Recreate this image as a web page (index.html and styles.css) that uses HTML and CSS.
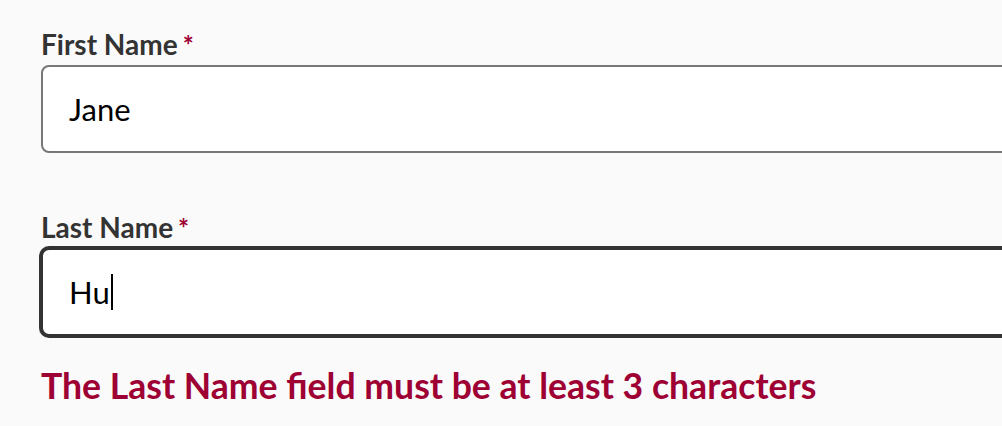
FILE: index.html
```html
<!DOCTYPE html>
<html lang="en">
<head>
<meta charset="utf-8">
<title>Name form</title>
<link rel="stylesheet" href="styles.css">
</head>
<body>
<form class="form">
  <div class="field">
    <label class="label">First Name<span class="req">*</span></label>
    <div class="input">Jane</div>
  </div>
  <div class="field">
    <label class="label">Last Name<span class="req">*</span></label>
    <div class="input input--focus">Hu<span class="caret"></span></div>
    <p class="error">The Last Name field must be at least 3 characters</p>
  </div>
</form>
</body>
</html>
```
FILE: styles.css
```css
html, body {
  margin: 0;
  padding: 0;
  background: #fafafa;
  overflow: hidden;
  height: 100%;
}
body {
  font-family: Lato, "Open Sans", sans-serif;
}
.form {
  display: flex;
  flex-direction: column;
  gap: 59px;
  padding: 29px 0 0 41px;
  width: 1100px;
}
.field {
  display: flex;
  flex-direction: column;
}
.label {
  font-weight: 700;
  font-size: 28px;
  line-height: 30px;
  color: #333333;
  margin-bottom: 5px;
}
.req {
  color: #9e0034;
  margin-left: 5px;
  font-size: 26px;
}
.input {
  box-sizing: border-box;
  height: 88px;
  border: 2px solid #777777;
  border-radius: 8px;
  background: #ffffff;
  display: flex;
  align-items: center;
  padding-left: 26px;
  font-size: 31px;
  color: #000000;
}
.input--focus {
  border-color: #333333;
  box-shadow: 0 0 0 2px #333333;
}
.caret {
  display: inline-block;
  width: 2px;
  height: 36px;
  background: #000;
  margin-left: 1px;
}
.error {
  margin: 30px 0 0;
  font-weight: 700;
  font-size: 35.6px;
  line-height: 40px;
  color: #9e0034;
}
```
